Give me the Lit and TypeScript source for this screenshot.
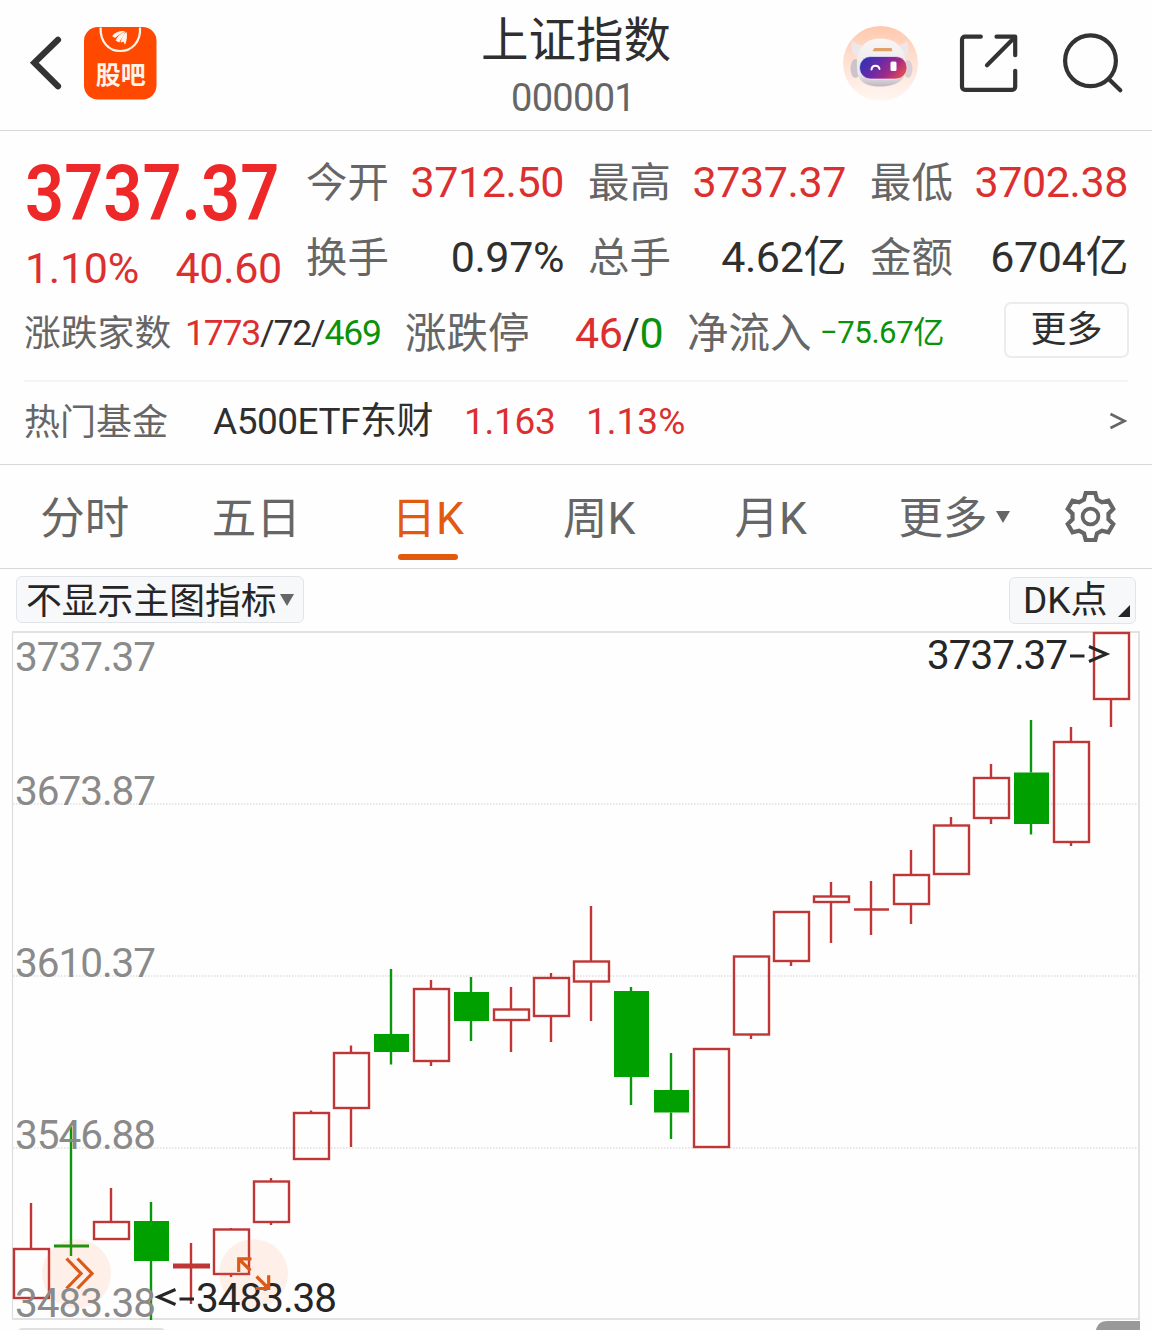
import { LitElement, html, svg, css } from "lit";
import { customElement } from "lit/decorators.js";
import { classMap } from "lit/directives/class-map.js";

type Candle = { kind: "up" | "down"; high: number; top: number; bottom: number; low: number; flat?: number };

const up = (high: number, top: number, bottom: number, low: number): Candle => ({ kind: "up", high, top, bottom, low });
const down = (high: number, top: number, bottom: number, low: number): Candle => ({ kind: "down", high, top, bottom, low });
const flat = (kind: "up" | "down", high: number, y: number, low: number, weight: number): Candle => ({
  kind, high, top: y, bottom: y, low, flat: weight,
});

const CANDLES: Candle[] = [
  up(1203, 1249, 1298, 1298),
  flat("down", 1127, 1246, 1256, 3),
  up(1188, 1222, 1239, 1239),
  down(1202, 1221, 1261, 1320),
  flat("up", 1243, 1266, 1304, 5),
  up(1228, 1229.5, 1274, 1277),
  up(1178, 1181.5, 1222, 1225),
  up(1110.5, 1113, 1159, 1159),
  up(1045.5, 1053, 1108, 1147),
  down(969, 1034, 1052, 1064.5),
  up(980, 989, 1061, 1066),
  down(977, 992, 1021, 1041),
  up(987, 1009.5, 1020, 1052),
  up(973, 978, 1016, 1042),
  up(906, 961.5, 981.5, 1021),
  down(987, 991, 1077, 1105),
  down(1053, 1090, 1112.5, 1139),
  up(1049, 1049, 1147, 1147),
  up(956.5, 956.5, 1034.5, 1039),
  up(912, 912, 961, 966),
  up(882, 896.5, 902, 943),
  flat("up", 881, 909.5, 935, 2.6),
  up(850, 875, 904, 924),
  up(817, 825.5, 874, 874),
  up(764, 778, 818, 824),
  down(720, 772.5, 824, 834.5),
  up(727, 742, 842, 846),
  up(633, 633, 699, 727),
];

const AXIS = [
  { label: "3737.37", y: 670.5 },
  { label: "3673.87", y: 804.5 },
  { label: "3610.37", y: 976.5 },
  { label: "3546.88", y: 1148.5 },
  { label: "3483.38", y: 1316.5 },
];

function gearPath(cx: number, cy: number): string {
  const pts: string[] = [];
  for (let k = 0; k < 6; k++) {
    const base = -90 + k * 60;
    for (const [r, off] of [[18.2, -21], [24, -11.5], [24, 11.5], [18.2, 21]]) {
      const a = ((base + off) * Math.PI) / 180;
      pts.push(`${(cx + r * Math.cos(a)).toFixed(2)} ${(cy + r * Math.sin(a)).toFixed(2)}`);
    }
  }
  return `M${pts.join("L")}Z`;
}

@customElement("stock-header")
class StockHeader extends LitElement {
  static styles = css`
    :host { display: block; }
    .bar {
      display: grid;
      grid-template-columns: 1fr auto 1fr;
      height: 130px;
      border-bottom: 1px solid #d8d8d8;
    }
    .side { display: flex; }
    .right { justify-content: flex-end; }
    svg { display: block; height: 130px; }
    .title { display: flex; flex-direction: column; align-items: center; }
    .name { font-size: 47.5px; line-height: 56px; padding-top: 13px; color: #2f2f2f; }
    .code { font-size: 38px; line-height: 44px; padding-top: 7px; color: #666; letter-spacing: -0.7px; margin-right: 6px; }
    .badge { font-family: "Noto Sans CJK SC", sans-serif; font-size: 25px; font-weight: 700; fill: #fff3ea; }
  `;
  render() {
    return html`
      <div class="bar">
        <div class="side">
          <svg width="84" viewBox="0 0 84 130">
            <path d="M58 39.8 34.3 62.8 58 86.2" fill="none" stroke="#333" stroke-width="6.2" stroke-linecap="round" stroke-linejoin="miter" />
          </svg>
          <svg width="76" viewBox="84 0 76 130">
            <rect x="84" y="27" width="72.5" height="72.5" rx="14" fill="#ff4800" />
            <path d="M100.6 27.5C100 42 109 51 120.3 51S141 42 140 27.5" fill="none" stroke="#fff3ea" stroke-width="2.2" />
            <path d="M112 36c3-4 8-5.500 13-5-3 2-7 4-10 7zM115.500 40.500c2-4 5.500-7.500 10-9-2 4-4 7.500-6.300 11zM120.500 42.500c1-4 3-8 6-10.800 1 4 .5 8.300-1.500 13l-1.400-3z" fill="#fff3ea" />
            <text class="badge" x="95.7" y="83.5" textLength="50">股吧</text>
          </svg>
        </div>
        <div class="title">
          <div class="name">上证指数</div>
          <div class="code">000001</div>
        </div>
        <div class="side right">
          <svg width="84" viewBox="840 0 84 130">
            <defs>
              <linearGradient id="halo" x1="0" y1="0" x2="0" y2="1">
                <stop offset="0" stop-color="#ffc8ad" /><stop offset=".5" stop-color="#ffe2d5" /><stop offset="1" stop-color="#fff6f2" />
              </linearGradient>
              <linearGradient id="visor" x1="0" y1=".2" x2="1" y2=".6">
                <stop offset="0" stop-color="#2b34b4" /><stop offset=".4" stop-color="#6a2aa8" /><stop offset=".7" stop-color="#a02a86" /><stop offset="1" stop-color="#e04a56" />
              </linearGradient>
              <linearGradient id="shell" x1="0" y1="0" x2="0" y2="1">
                <stop offset="0" stop-color="#f8f5f5" /><stop offset=".75" stop-color="#ebe7ea" /><stop offset="1" stop-color="#bdb7c1" />
              </linearGradient>
            </defs>
            <circle cx="880.5" cy="63.5" r="37.5" fill="url(#halo)" />
            <ellipse cx="855.5" cy="68.5" rx="5" ry="9.5" fill="#cbc4ca" />
            <ellipse cx="908" cy="69" rx="4.5" ry="9" fill="#d8d0d5" />
            <path d="M852.500 40.500c-2 5-1 10 1 13.500l7 4 7-12c-6 0-12-1.500-15-5.500zM906.500 41c3 5 2.500 10 .5 14l-6 4-6-13c5-.5 10-2 11.500-5z" fill="#eee7e9" />
            <path d="M857 67c-.5-19 8-28.500 23.500-28.500s25.500 9.500 26 28.500c0 13-10 19.500-26.500 19.500s-23-6.500-23-19.500z" fill="url(#shell)" />
            <rect x="859.5" y="56.5" width="47.5" height="22.5" rx="11" fill="url(#visor)" stroke="#fff" stroke-opacity=".6" stroke-width="1" />
            <path d="M872.500 51l2-3h17l1 3.200h-19z" fill="#e0a06a" />
            <path d="M871.5 69.5c.5-5 7-5 8-.6" fill="none" stroke="#fff" stroke-width="2" stroke-linecap="round" />
            <rect x="890.5" y="61.5" width="6" height="9.5" rx="1.5" fill="#fff" />
          </svg>
          <svg width="126" viewBox="924 0 126 130">
            <g fill="none" stroke="#333" stroke-width="4.2" stroke-linecap="round" stroke-linejoin="round">
              <path d="M980.8 36.7H965a3 3 0 0 0-3 3V86.8a3 3 0 0 0 3 3h47.200a3 3 0 0 0 3-3V70.8" />
              <path d="M996.5 36.7h18.700V55.2" />
              <path d="M1014 38 987 65.2" />
            </g>
          </svg>
          <svg width="102" viewBox="1050 0 102 130">
            <g fill="none" stroke="#333" stroke-width="4.2" stroke-linecap="round">
              <circle cx="1090.5" cy="60.8" r="25.4" />
              <path d="M1109 79.2 1120.3 90.2" />
            </g>
          </svg>
        </div>
      </div>
    `;
  }
}

const STATS = [
  { label: "今开", value: "3712.50", tone: "rise" },
  { label: "最高", value: "3737.37", tone: "rise" },
  { label: "最低", value: "3702.38", tone: "rise" },
  { label: "换手", value: "0.97%", tone: "" },
  { label: "总手", value: "4.62亿", tone: "" },
  { label: "金额", value: "6704亿", tone: "" },
];

@customElement("stock-quote")
class StockQuote extends LitElement {
  static styles = css`
    :host { display: block; color: #2f2f2f; }
    .quote { padding: 14px 24px 0; height: 235px; box-sizing: border-box; }
    .summary { display: grid; grid-template-columns: 282px 1fr; height: 150px; }
    .price {
      font-size: 77px; font-weight: 600; line-height: 90px; height: 90px;
      padding-top: 4px; margin-left: 1px; color: #ee2828; white-space: nowrap;
      transform: scaleX(0.89); transform-origin: 0 0;
    }
    .change {
      display: flex; justify-content: space-between; width: 257px; line-height: 59px;
      font-size: 43px; padding-left: 1px; letter-spacing: -0.3px;
    }
    .stats { display: grid; grid-template-columns: repeat(3, 258px); column-gap: 24px; grid-auto-rows: 75px; }
    .stat { display: flex; justify-content: space-between; line-height: 75px; font-size: 43px; letter-spacing: -0.4px; }
    .label { font-size: 41.4px; color: #666; line-height: 77px; letter-spacing: 0; }
    .rise { color: #dc2f2f; }
    .fall { color: #0a930a; }
    .breadth { display: flex; align-items: center; height: 76px; line-height: 74px; white-space: nowrap; }
    .counts-label { font-size: 36.8px; color: #666; width: 161px; padding-top: 2px; }
    .counts { font-size: 35.5px; letter-spacing: -1.2px; width: 220px; }
    .limits-label { font-size: 41.5px; color: #666; width: 170px; padding-top: 1px; }
    .limits { font-size: 43px; width: 112px; letter-spacing: -0.5px; }
    .flow-label { font-size: 41.5px; color: #666; width: 133px; padding-top: 1px; }
    .flow { font-size: 31.2px; letter-spacing: -0.5px; }
    .more {
      margin: -6px -1px 0 auto; box-sizing: border-box; width: 125px; height: 56px; border: 2px solid #ececec;
      border-radius: 7px; font-size: 36px; line-height: 53px; text-align: center;
    }
    .fund {
      display: flex; align-items: center; margin: 14px 24px 0; height: 84px; line-height: 78px;
      box-sizing: border-box; border-top: 2px solid #f4f4f4; font-size: 37px; white-space: nowrap;
    }
    .fund span { margin-top: -3px; }
    .fund .fund-label { font-size: 36px; color: #666; width: 189px; margin-top: -1px; }
    .fund-name { width: 251px; letter-spacing: -0.5px; }
    .fund-price { width: 122px; letter-spacing: -0.3px; }
    .chevron { margin: -4px 1px 0 auto; display: block; }
    .end { height: 1px; background: #d8d8d8; }
  `;
  render() {
    return html`
      <div class="quote">
        <div class="summary">
          <div>
            <div class="price">3737.37</div>
            <div class="change rise"><span>1.10%</span><span>40.60</span></div>
          </div>
          <div class="stats">
            ${STATS.map((s) => html`
              <div class="stat"><span class="label">${s.label}</span><span class=${s.tone}>${s.value}</span></div>
            `)}
          </div>
        </div>
        <div class="breadth">
          <span class="counts-label">涨跌家数</span>
          <span class="counts"><span class="rise">1773</span>/72/<span class="fall">469</span></span>
          <span class="limits-label">涨跌停</span>
          <span class="limits"><span class="rise">46</span>/<span class="fall">0</span></span>
          <span class="flow-label">净流入</span>
          <span class="flow fall">−75.67亿</span>
          <div class="more">更多</div>
        </div>
      </div>
      <div class="fund">
        <span class="fund-label">热门基金</span>
        <span class="fund-name">A500ETF东财</span>
        <span class="fund-price rise">1.163</span>
        <span class="rise">1.13%</span>
        <svg class="chevron" width="18" height="20" viewBox="0 0 18 20">
          <path d="M1.5 3 15.5 10 1.5 17" fill="none" stroke="#666" stroke-width="2.6" />
        </svg>
      </div>
      <div class="end"></div>
    `;
  }
}

const TABS = ["分时", "五日", "日K", "周K", "月K", "更多"];

@customElement("period-tabs")
class PeriodTabs extends LitElement {
  static styles = css`
    :host { display: block; }
    .tabs {
      display: grid; grid-template-columns: repeat(5, 171.5px) 195px 1fr; height: 104px;
      box-sizing: border-box; border-bottom: 1px solid #d8d8d8;
    }
    .tab {
      display: flex; flex-direction: column; align-items: center;
      font-size: 44.5px; line-height: 60px; height: 103px; color: #666;
    }
    .word { display: flex; align-items: center; gap: 8px; height: 60px; padding: 24px 2px 5px 0; }
    .active { color: #e25a10; }
    .mark { width: 60px; height: 6px; border-radius: 3px; background: #e25a10; margin-right: 1px; }
    .arrow { width: 0; height: 0; border: solid transparent; border-width: 12px 7.5px 0; border-top-color: #666; margin-top: -5px; }
    .gear { display: block; margin-left: 7px; }
  `;
  render() {
    return html`
      <div class="tabs">
        ${TABS.map((t, i) => html`
          <div class=${classMap({ tab: true, active: i === 2 })}>
            <div class="word">${t}${i === 5 ? html`<span class="arrow"></span>` : null}</div>
            ${i === 2 ? html`<div class="mark"></div>` : null}
          </div>
        `)}
        <svg class="gear" width="66" height="103" viewBox="0 0 66 103">
          <path d=${gearPath(30.5, 51.5)} fill="none" stroke="#666" stroke-width="4.2" stroke-linejoin="miter" />
          <circle cx="30.5" cy="51.5" r="7.9" fill="none" stroke="#666" stroke-width="3.8" />
        </svg>
      </div>
    `;
  }
}

@customElement("k-chart")
class KChart extends LitElement {
  static styles = css`
    :host { display: block; }
    .tools { display: flex; justify-content: space-between; padding: 7px 16px 0; height: 62px; box-sizing: border-box; }
    .tool {
      display: flex; align-items: center; box-sizing: border-box; height: 47px; border: 1.5px solid #e2e4e8;
      border-radius: 6px; background: #f7f8fa; color: #262626; font-size: 35.8px; line-height: 46px; white-space: nowrap;
    }
    .name { padding-top: 3px; }
    .indicator { width: 288px; padding-left: 9px; gap: 3px; }
    .indicator .name { padding-top: 5px; }
    .dk { width: 127px; margin-top: 1px; padding-left: 13px; font-size: 37px; }
    .dk .name { padding-top: 1px; }
    .arrow { width: 0; height: 0; border: solid transparent; border-width: 12px 7.5px 0; border-top-color: #666; }
    .corner { width: 12px; height: 12px; background: #262626; clip-path: polygon(100% 0, 100% 100%, 0 100%); align-self: flex-end; margin: 0 5px 6px auto; }
    .plot { display: block; }
    .axis { font-size: 40.5px; fill: #8a8a8a; }
    .extreme { font-size: 40.5px; fill: #262626; }
    .wick, .box { stroke-width: 2.4px; fill: none; }
    .up { stroke: #c03636; }
    .down { stroke: #0a960a; }
    .body { fill: #00a000; }
    .halo { fill: #ff7840; fill-opacity: 0.11; }
    .glyph { fill: none; stroke: #db5a18; stroke-width: 3.2px; }
  `;
  private candle(c: Candle, i: number) {
    const x = 31 + i * 40;
    const wick = (a: number, b: number) => (b > a ? svg`<path class="wick ${c.kind}" d="M${x} ${a}V${b}" />` : null);
    if (c.flat) {
      const wide = c.flat > 4 ? 1 : 0;
      return svg`${wick(c.high, c.low)}
        <path class="${c.kind}" stroke-width=${c.flat} d="M${x - 17 - wide} ${c.top}H${x + 18 + wide}" />`;
    }
    const body = c.kind === "up"
      ? svg`<rect class="box up" x=${x - 17} y=${c.top} width="35" height=${c.bottom - c.top} />`
      : svg`<rect class="body" x=${x - 17} y=${c.top} width="35" height=${c.bottom - c.top} />`;
    return svg`${wick(c.high, c.top)}${wick(c.bottom, c.low)}${body}`;
  }
  render() {
    return html`
      <div class="tools">
        <div class="tool indicator"><span class="name">不显示主图指标</span><span class="arrow"></span></div>
        <div class="tool dk"><span class="name">DK点</span><span class="corner"></span></div>
      </div>
      <svg class="plot" width="1152" height="699" viewBox="0 631 1152 699">
        ${[804, 976, 1148].map((y) => svg`<path d="M13 ${y}H1138" stroke="#e0e0e0" stroke-width="1.4" stroke-dasharray="1.5 1.5" />`)}
        <path d="M12.5 632V1319" stroke="#dedede" stroke-width="1.2" />
        <path d="M12 632H1139V1319H12" fill="none" stroke="#e2e2e2" stroke-width="2" />
        ${CANDLES.map((c, i) => this.candle(c, i))}
        <circle class="halo" cx="76.5" cy="1273.7" r="34.5" />
        <circle class="halo" cx="253.5" cy="1273.7" r="34.5" />
        <path class="glyph" d="M66.5 1258.5 81 1273.5 66.5 1288.5M77.5 1258.5 92 1273.5 77.5 1288.5" />
        ${AXIS.map((a) => svg`<text class="axis" x="15" y=${a.y} textLength="141">${a.label}</text>`)}
        <text class="extreme" x="927" y="668.5" textLength="141">3737.37</text>
        <path d="M1070 656h14.5M1089 646.5 1106.5 654 1089 661.5" fill="none" stroke="#262626" stroke-width="3" />
        <text class="extreme" x="196" y="1311.5" textLength="141">3483.38</text>
        <path d="M179.5 1299h14.5M175.5 1289.5 158 1297 175.5 1304.5" fill="none" stroke="#262626" stroke-width="3" />
        <path class="glyph" d="M251.5 1258.8H238.7V1272M238.7 1258.8 250.5 1270.5M255.5 1288.5H268.7V1275.3M268.7 1288.5 256.5 1276.5" />
        <path d="M19 1330a6 3 0 0 1 3-1H161a6 3 0 0 1 3 1" fill="none" stroke="#e0e0e0" stroke-width="2" />
        <path d="M1095.5 1332c1-7 5-11 12-11H1140v12z" fill="#999" />
      </svg>
    `;
  }
}

@customElement("app-root")
class AppRoot extends LitElement {
  static styles = css`
    :host {
      display: block; width: 1152px; height: 1330px; overflow: hidden; background: #fefefe;
      font-family: Roboto, "Noto Sans CJK SC", sans-serif;
    }
  `;
  render() {
    return html`
      <stock-header></stock-header>
      <stock-quote></stock-quote>
      <period-tabs></period-tabs>
      <k-chart></k-chart>
    `;
  }
}
